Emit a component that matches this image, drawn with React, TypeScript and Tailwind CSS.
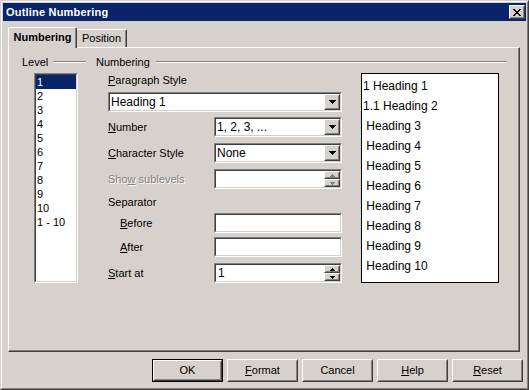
import React from "react";

const BG = "bg-[#d6d1cc]";

function Raised({ className = "", children }: { className?: string; children?: React.ReactNode }) {
  return (
    <div className={`border border-t-white border-l-white border-r-[#404040] border-b-[#404040] ${BG} ${className}`}>
      <div className="w-full h-full border border-t-[#d6d1cc] border-l-[#d6d1cc] border-r-[#808080] border-b-[#808080] flex items-center justify-center">
        {children}
      </div>
    </div>
  );
}

function Sunken({ className = "", inner = "", children }: { className?: string; inner?: string; children?: React.ReactNode }) {
  return (
    <div className={`border border-t-[#808080] border-l-[#808080] border-r-white border-b-white ${className}`}>
      <div className={`w-full h-full border border-t-[#404040] border-l-[#404040] border-r-[#d4d0c8] border-b-[#d4d0c8] bg-white ${inner}`}>
        {children}
      </div>
    </div>
  );
}

function DownArrow() {
  return (
    <svg width="7" height="4" viewBox="0 0 7 4" shapeRendering="crispEdges">
      <path d="M0 0h7v1H0zM1 1h5v1H1zM2 2h3v1H2zM3 3h1v1H3z" fill="#000" />
    </svg>
  );
}

function SpinArrow({ up, disabled }: { up: boolean; disabled?: boolean }) {
  const d = up ? "M2 0h1v1H2zM1 1h3v1H1zM0 2h5v1H0z" : "M0 0h5v1H0zM1 1h3v1H1zM2 2h1v1H2z";
  return (
    <svg width="5" height="3" viewBox="0 0 5 3" shapeRendering="crispEdges">
      <path d={d} fill={disabled ? "#808080" : "#000"} />
    </svg>
  );
}

function Combo({ value, width }: { value: string; width: string }) {
  return (
    <Sunken className={`${width} h-[20px]`} inner="flex items-center">
      <span className="flex-1 pl-[1px] whitespace-pre text-[12px]">{value}</span>
      <Raised className="w-[16px] h-[16px]">
        <DownArrow />
      </Raised>
    </Sunken>
  );
}

function Spin({ value, disabled }: { value: string; disabled?: boolean }) {
  return (
    <Sunken className="w-[128px] h-[20px]" inner="flex items-center">
      <span className="flex-1 pl-[2px] text-[12px]">{value}</span>
      <div className="flex flex-col w-[16px] h-[16px]">
        <Raised className="w-[16px] h-[8px]">
          <SpinArrow up disabled={disabled} />
        </Raised>
        <Raised className="w-[16px] h-[8px]">
          <SpinArrow up={false} disabled={disabled} />
        </Raised>
      </div>
    </Sunken>
  );
}

function GroupHeader({ title, gap }: { title: string; gap: string }) {
  return (
    <div className={`flex items-center h-[14px] ${gap}`}>
      <span>{title}</span>
      <div className="flex-1 h-[2px] border-t border-t-[#808080] border-b border-b-white" />
    </div>
  );
}

function Btn({ children, def }: { children: React.ReactNode; def?: boolean }) {
  if (def) {
    return (
      <div className="w-[71px] h-[23px] border border-black">
        <Raised className="w-full h-full">{children}</Raised>
      </div>
    );
  }
  return <Raised className="w-[71px] h-[23px]">{children}</Raised>;
}

export default function App() {
  const levels = ["1", "2", "3", "4", "5", "6", "7", "8", "9", "10", "1 - 10"];
  const headings = [
    "1 Heading 1",
    "1.1 Heading 2",
    " Heading 3",
    " Heading 4",
    " Heading 5",
    " Heading 6",
    " Heading 7",
    " Heading 8",
    " Heading 9",
    " Heading 10",
  ];
  return (
    <div
      className={`w-[529px] h-[390px] ${BG} border border-t-[#d4d0c8] border-l-[#d4d0c8] border-r-[#404040] border-b-[#404040] text-[11px] text-black leading-none font-['Liberation_Sans',Arial,sans-serif] overflow-hidden`}
    >
      <div className="w-full h-full border border-t-white border-l-white border-r-[#808080] border-b-[#808080] p-[1px] flex flex-col">
        {/* Title bar */}
        <div className="h-[18px] bg-[#0a246a] flex items-center pl-[3px] pr-[1px] shrink-0">
          <span className="flex-1 text-white font-bold text-[11px] tracking-[0.2px]">Outline Numbering</span>
          <Raised className="w-[16px] h-[14px]">
            <svg width="8" height="7" viewBox="0 0 8 7" shapeRendering="crispEdges">
              <path
                d="M0 0h2v1H0zM6 0h2v1H6zM1 1h2v1H1zM5 1h2v1H5zM2 2h4v1H2zM3 3h2v1H3zM2 4h4v1H2zM1 5h2v1H1zM5 5h2v1H5zM0 6h2v1H0zM6 6h2v1H6z"
                fill="#000"
              />
            </svg>
          </Raised>
        </div>

        {/* Tabs */}
        <div className="mt-[6px] h-[20px] pl-[5px] flex items-end shrink-0">
          <div
            className={`relative z-10 mb-[-1px] h-[21px] w-[69px] ${BG} border-t border-l border-t-white border-l-white border-r border-r-[#404040] rounded-tl-[2px] rounded-tr-[2px] shadow-[inset_-1px_0_0_#808080] flex items-center justify-center font-bold pb-[2px]`}
          >
            Numbering
          </div>
          <div
            className={`h-[18px] w-[50px] ${BG} border-t border-t-white border-r border-r-[#404040] rounded-tr-[2px] shadow-[inset_-1px_0_0_#808080] flex items-center justify-center`}
          >
            Position
          </div>
        </div>

        {/* Panel */}
        <div className="ml-[5px] w-[512px] h-[305px] shrink-0 border-t border-l border-t-white border-l-white border-r border-b border-r-[#404040] border-b-[#404040] shadow-[inset_-1px_-1px_0_#808080] flex">
          {/* Level column */}
          <div className="ml-[13px] pt-[7px] w-[64px]">
            <GroupHeader title="Level" gap="gap-[5px]" />
            <Sunken className="ml-[12px] mt-[4px] w-[44px] h-[210px]">
              {levels.map((l, i) => (
                <div
                  key={l}
                  className={`h-[14px] pl-[1px] flex items-center ${i === 0 ? "bg-[#0a246a] text-white" : ""}`}
                >
                  {l}
                </div>
              ))}
            </Sunken>
          </div>

          {/* Numbering column */}
          <div className="ml-[10px] pt-[7px] w-[411px]">
            <GroupHeader title="Numbering" gap="gap-[6px]" />
            <div className="ml-[12px] mt-[4px] flex gap-[19px]">
              {/* Form */}
              <div className="w-[234px] flex flex-col">
                <div className="h-[14px] flex items-center">
                  <span>
                    <span className="underline">P</span>aragraph Style
                  </span>
                </div>
                <div className="mt-[5px]">
                  <Combo value="Heading 1" width="w-[234px]" />
                </div>
                <div className="mt-[5px] h-[20px] flex items-center">
                  <span className="w-[106px]">
                    <span className="underline">N</span>umber
                  </span>
                  <Combo value="1, 2, 3, ..." width="w-[128px]" />
                </div>
                <div className="mt-[6px] h-[20px] flex items-center">
                  <span className="w-[106px]">
                    <span className="underline">C</span>haracter Style
                  </span>
                  <Combo value="None" width="w-[128px]" />
                </div>
                <div className="mt-[6px] h-[20px] flex items-center">
                  <span className="w-[106px] text-[#808080] [text-shadow:1px_1px_0_#fff]">
                    Sho<span className="underline">w</span> sublevels
                  </span>
                  <Spin value="" disabled />
                </div>
                <div className="mt-[6px] h-[14px] flex items-center">
                  <span>Separator</span>
                </div>
                <div className="mt-[4px] h-[20px] flex items-center">
                  <span className="w-[106px] pl-[12px]">
                    <span className="underline">B</span>efore
                  </span>
                  <Sunken className="w-[128px] h-[20px]" />
                </div>
                <div className="mt-[4px] h-[20px] flex items-center">
                  <span className="w-[106px] pl-[12px]">
                    <span className="underline">A</span>fter
                  </span>
                  <Sunken className="w-[128px] h-[20px]" />
                </div>
                <div className="mt-[6px] h-[20px] flex items-center">
                  <span className="w-[106px]">
                    <span className="underline">S</span>tart at
                  </span>
                  <Spin value="1" />
                </div>
              </div>

              {/* Preview */}
              <div className="w-[138px] h-[210px] border border-black bg-white pt-[2px] pl-[1px] font-['Liberation_Sans',Arial,sans-serif] text-[12px]">
                {headings.map((h) => (
                  <div key={h} className="h-[20px] flex items-center whitespace-pre">
                    {h}
                  </div>
                ))}
              </div>
            </div>
          </div>
        </div>

        {/* Buttons */}
        <div className="mt-[7px] pr-[3px] flex justify-end gap-[4px] shrink-0">
          <Btn def>OK</Btn>
          <Btn>
            <span>
              <span className="underline">F</span>ormat
            </span>
          </Btn>
          <Btn>Cancel</Btn>
          <Btn>
            <span>
              <span className="underline">H</span>elp
            </span>
          </Btn>
          <Btn>
            <span>
              <span className="underline">R</span>eset
            </span>
          </Btn>
        </div>
      </div>
    </div>
  );
}
